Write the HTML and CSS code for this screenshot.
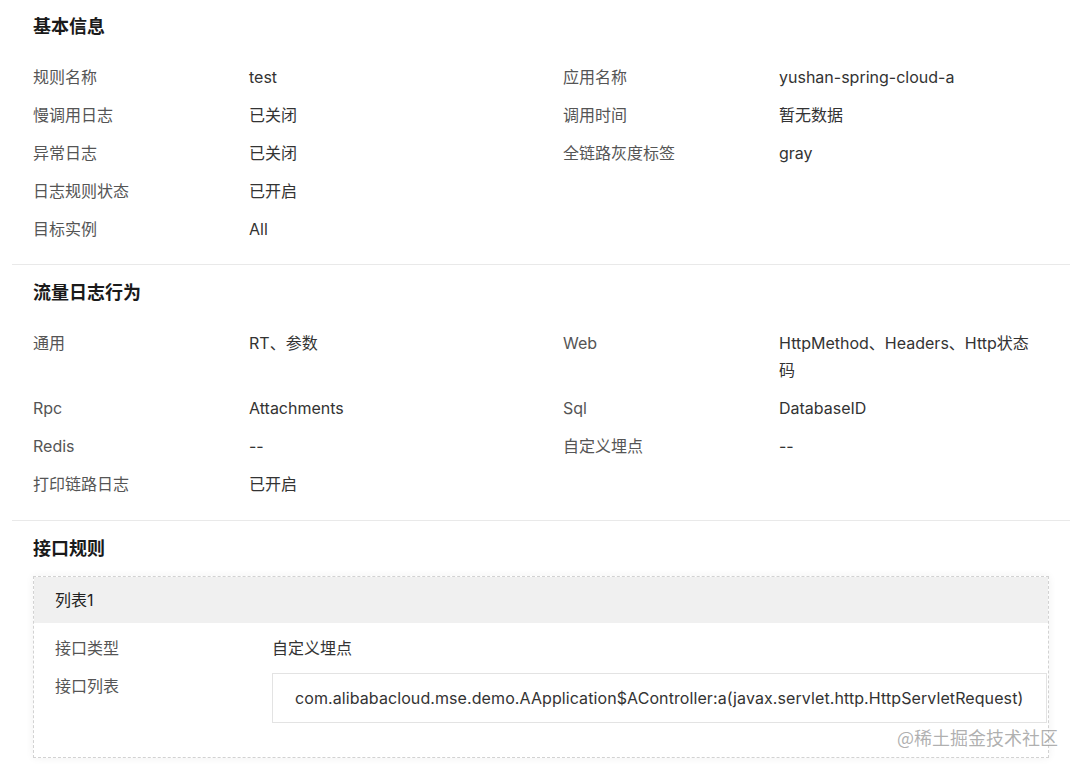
FILE: index.html
```html
<!DOCTYPE html>
<html>
<head>
    <title>日志规则详情</title>
    <link rel="stylesheet" href="styles.css">
</head>
<body>
  <div class="page">

    <div class="section first">
      <h3 class="section-title">基本信息</h3>
      <div class="info-grid">
        <span class="label">规则名称</span><span class="value">test</span>
        <span class="label">应用名称</span><span class="value">yushan-spring-cloud-a</span>

        <span class="label">慢调用日志</span><span class="value">已关闭</span>
        <span class="label">调用时间</span><span class="value">暂无数据</span>

        <span class="label">异常日志</span><span class="value">已关闭</span>
        <span class="label">全链路灰度标签</span><span class="value">gray</span>

        <span class="label">日志规则状态</span><span class="value">已开启</span>
        <span class="label"></span><span class="value"></span>

        <span class="label">目标实例</span><span class="value">All</span>
      </div>
    </div>

    <div class="section">
      <h3 class="section-title">流量日志行为</h3>
      <div class="info-grid">
        <span class="label">通用</span><span class="value">RT、参数</span>
        <span class="label">Web</span><span class="value">HttpMethod、Headers、Http状态码</span>

        <span class="label">Rpc</span><span class="value">Attachments</span>
        <span class="label">Sql</span><span class="value">DatabaseID</span>

        <span class="label">Redis</span><span class="value">--</span>
        <span class="label">自定义埋点</span><span class="value">--</span>

        <span class="label">打印链路日志</span><span class="value">已开启</span>
      </div>
    </div>

    <div class="section last">
      <h3 class="section-title tight">接口规则</h3>
      <div class="rule-card">
        <div class="rule-head">列表1</div>
        <div class="rule-body">
          <span class="label">接口类型</span><span class="value">自定义埋点</span>
          <span class="label">接口列表</span>
          <div class="api-box">com.alibabacloud.mse.demo.AApplication$AController:a(javax.servlet.http.HttpServletRequest)</div>
        </div>
      </div>
    </div>

  </div>
  <div class="watermark">@稀土掘金技术社区</div>
</body>
</html>
```

FILE: styles.css
```css
/* Reset */
body, h3 {
    margin: 0;
    padding: 0;
}

* {
    box-sizing: border-box;
}

body {
    position: relative;
    height: 768px;
    overflow: hidden;
    background-color: #ffffff;
    font-family: Inter, "Noto Sans CJK SC", sans-serif;
    font-size: 16px;
    line-height: 27px;
    color: #333333;
}

.page {
    margin: 0 10px 0 12px;
}

/* Sections */
.section {
    padding: 16px 21px 22px;
    border-bottom: 1px solid #e9e9e9;
}

.section.first {
    padding-top: 15px;
    padding-bottom: 21px;
}

.section.last {
    border-bottom: none;
}

.section-title {
    font-size: 18px;
    line-height: 24px;
    font-weight: bold;
    color: #1a1a1a;
    margin-bottom: 25px;
}

.section-title.tight {
    margin-bottom: 15px;
}

/* Info rows */
.info-grid {
    display: grid;
    grid-template-columns: 216px 314px 216px 262px;
    row-gap: 11px;
}

.label {
    color: #555555;
}

.value {
    color: #333333;
}

/* Interface rule card */
.rule-card {
    border: 1px dashed #d2d2d2;
    box-shadow: 0 0 8px rgba(0, 0, 0, 0.06);
}

.rule-head {
    background-color: #f0f0f0;
    height: 46px;
    line-height: 46px;
    padding-left: 21px;
    color: #222222;
}

.rule-body {
    display: grid;
    grid-template-columns: 217px 1fr;
    row-gap: 11px;
    padding: 12px 1px 34px 21px;
}

.api-box {
    border: 1px solid #e3e3e3;
    height: 50px;
    line-height: 48px;
    padding-left: 22px;
    letter-spacing: 0.09px;
    white-space: nowrap;
    overflow: hidden;
}

.watermark {
    position: absolute;
    right: 22px;
    bottom: 19px;
    font-family: "Noto Sans CJK SC", sans-serif;
    font-size: 18px;
    line-height: 24px;
    color: rgba(150, 150, 150, 0.75);
}
```
